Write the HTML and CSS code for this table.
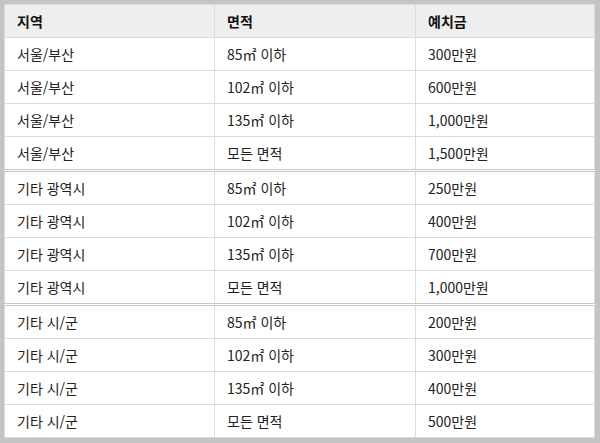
FILE: index.html
```html
<!DOCTYPE html>
<html lang="ko">
<head>
<meta charset="utf-8">
<link rel="stylesheet" href="styles.css">
</head>
<body>
<div class="frame">
<table class="deposit">
  <thead>
    <tr><th class="c1">지역</th><th class="c2">면적</th><th class="c3">예치금</th></tr>
  </thead>
  <tbody>
    <tr><td>서울/부산</td><td>85㎡ 이하</td><td>300만원</td></tr>
    <tr><td>서울/부산</td><td>102㎡ 이하</td><td>600만원</td></tr>
    <tr><td>서울/부산</td><td>135㎡ 이하</td><td>1,000만원</td></tr>
    <tr><td>서울/부산</td><td>모든 면적</td><td>1,500만원</td></tr>
    <tr class="group"><td>기타 광역시</td><td>85㎡ 이하</td><td>250만원</td></tr>
    <tr><td>기타 광역시</td><td>102㎡ 이하</td><td>400만원</td></tr>
    <tr><td>기타 광역시</td><td>135㎡ 이하</td><td>700만원</td></tr>
    <tr><td>기타 광역시</td><td>모든 면적</td><td>1,000만원</td></tr>
    <tr class="group"><td>기타 시/군</td><td>85㎡ 이하</td><td>200만원</td></tr>
    <tr><td>기타 시/군</td><td>102㎡ 이하</td><td>300만원</td></tr>
    <tr><td>기타 시/군</td><td>135㎡ 이하</td><td>400만원</td></tr>
    <tr><td>기타 시/군</td><td>모든 면적</td><td>500만원</td></tr>
  </tbody>
</table>
</div>
</body>
</html>
```
FILE: styles.css
```css
html, body {
  margin: 0;
  padding: 0;
}
body {
  background: #c4c4c4;
  width: 600px;
  height: 443px;
  overflow: hidden;
}
.frame {
  padding: 4px 5px 6px 4px;
}
.deposit {
  width: 591px;
  height: 433px;
  border-collapse: collapse;
  background: #ffffff;
  font-family: "Noto Sans CJK KR", "Noto Sans", sans-serif;
  font-size: 14px;
  color: #222222;
  table-layout: fixed;
}
.deposit th,
.deposit td {
  border: 1px solid #dcdcdc;
  text-align: left;
  padding: 0 12px;
  height: 32px;
  line-height: 20px;
}
.deposit th {
  background: #eeeeee;
  font-weight: bold;
  color: #111111;
}
.c1 { width: 185px; }
.c2 { width: 176px; }
.deposit tr.group td {
  border-top: 3px double #c8c8c8;
}
```
